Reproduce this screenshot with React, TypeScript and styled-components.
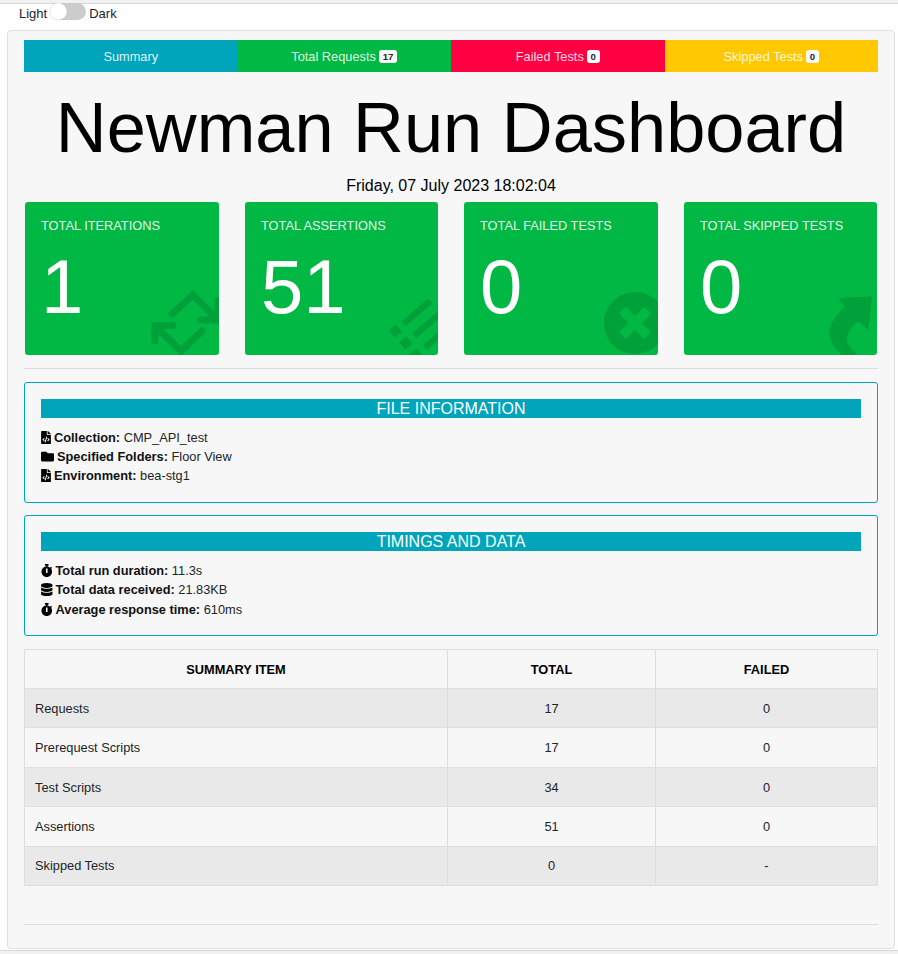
import React from "react"
import styled, { createGlobalStyle } from "styled-components"
import {
  FaDatabase,
  FaFileCode,
  FaFolder,
  FaList,
  FaStopwatch,
  FaTimesCircle,
} from "react-icons/fa"

const GlobalStyle = createGlobalStyle`
  html, body {
    margin: 0;
    padding: 0;
    background: #fff;
    color: #111;
    font-family: "Liberation Sans", Arial, sans-serif;
    font-size: 12.8px;
  }
`

const TopEdge = styled.div`
  height: 3px;
  background: #f1f1f1;
  border-bottom: 1px solid #d8d8d8;
`

const ThemeRow = styled.div`
  display: flex;
  align-items: center;
  height: 18px;
  padding-left: 19px;
  gap: 3px;
  font-size: 13px;
  color: #212529;
`

const Toggle = styled.span`
  position: relative;
  display: inline-block;
  width: 36px;
  height: 17px;
  border-radius: 9px;
  background: #ccc;
  margin-top: -4px;

  &::before {
    content: "";
    position: absolute;
    left: 0;
    top: 0;
    width: 17px;
    height: 17px;
    border-radius: 50%;
    background: #fff;
    box-shadow: 0 0 1px rgba(0, 0, 0, 0.25);
  }
`

const Page = styled.div`
  box-sizing: border-box;
  width: 888px;
  height: 919px;
  margin: 8px 0 0 7px;
  padding: 9px 16px 0;
  background: #f7f7f7;
  border: 1px solid #dfdfdf;
  border-radius: 4px;
`

const Nav = styled.nav`
  display: grid;
  grid-template-columns: repeat(4, 1fr);
  height: 32px;
`

const NavItem = styled.div<{ $bg: string }>`
  display: flex;
  align-items: center;
  justify-content: center;
  gap: 3px;
  background: ${p => p.$bg};
  color: rgba(255, 255, 255, 0.88);
  font-size: 12.8px;
`

const Badge = styled.span`
  display: inline-block;
  padding: 2px 3.8px;
  background: #fff;
  color: #212529;
  border-radius: 3px;
  font-size: 9.6px;
  font-weight: 700;
  line-height: 1;
  margin-top: 1px;
`

const Title = styled.h1`
  margin: 13px 0 0;
  text-align: center;
  font-size: 70.4px;
  font-weight: 400;
  line-height: 86px;
  color: #000;
`

const DateLine = styled.div`
  margin-top: 6px;
  text-align: center;
  font-size: 16px;
  line-height: 18px;
  color: #000;
`

const Stats = styled.div`
  display: grid;
  grid-template-columns: 194px 193px 194px 193px;
  justify-content: space-between;
  margin: 7px 1px 0;
`

const StatCard = styled.div`
  position: relative;
  overflow: hidden;
  box-sizing: border-box;
  height: 153px;
  padding: 16px;
  background: #00b843;
  border-radius: 3px;
  color: #fff;
`

const StatLabel = styled.div`
  color: rgba(255, 255, 255, 0.9);
  font-size: 12.8px;
  line-height: 16px;
`

const StatValue = styled.div`
  margin-top: 11px;
  font-size: 76px;
  line-height: 84px;
  color: #fff;
`

const StatIcon = styled.span<{ $right: number; $bottom: number; $size?: number; $rotate?: number }>`
  position: absolute;
  right: ${p => p.$right}px;
  bottom: ${p => p.$bottom}px;
  display: flex;
  color: #000;
  opacity: 0.12;
  font-size: ${p => p.$size ?? 16}px;
  transform: rotate(${p => p.$rotate ?? 0}deg);
`

const Rule = styled.hr<{ $top: number; $bottom: number }>`
  margin: ${p => p.$top}px 0 ${p => p.$bottom}px;
  border: 0;
  border-top: 1px solid #dcdcdc;
`

const InfoBox = styled.section`
  box-sizing: border-box;
  height: 121px;
  margin-bottom: 12px;
  padding: 16px;
  border: 1px solid #00a5bb;
  border-radius: 3px;
`

const InfoHeading = styled.h2`
  margin: 0 0 10px;
  height: 19px;
  background: #00a5bb;
  color: #fff;
  text-align: center;
  font-size: 16px;
  font-weight: 400;
  line-height: 19px;
`

const InfoLine = styled.div<{ $height?: number }>`
  display: flex;
  align-items: center;
  gap: 3px;
  height: ${p => p.$height ?? 19}px;
  font-size: 12.8px;
  color: #212529;

  svg {
    flex: none;
    color: #000;
  }

  b {
    color: #111;
  }
`

const FileIcon = styled(FaFileCode)`
  && {
    width: 10px;
    height: 13px;
  }
`

const FolderIcon = styled(FaFolder)`
  && {
    width: 13px;
    height: 13px;
  }
`

const WatchIcon = styled(FaStopwatch)`
  && {
    width: 11.5px;
    height: 13px;
  }
`

const DataIcon = styled(FaDatabase)`
  && {
    width: 11.5px;
    height: 13px;
  }
`

const Table = styled.table`
  width: 853px;
  margin-top: 13px;
  border-collapse: collapse;
  table-layout: fixed;
  font-size: 12.8px;
  color: #212529;
`

const HeadCell = styled.th<{ $width: number }>`
  box-sizing: border-box;
  width: ${p => p.$width}px;
  height: 39px;
  padding: 0;
  border: 1px solid #dedede;
  color: #000;
  font-weight: 700;
  text-align: center;
`

const Row = styled.tr<{ $striped: boolean }>`
  background: ${p => (p.$striped ? "#e9e9e9" : "transparent")};
`

const Cell = styled.td<{ $name?: boolean }>`
  box-sizing: border-box;
  height: 39.45px;
  padding: ${p => (p.$name ? "0 0 0 10px" : "0")};
  border: 1px solid #dedede;
  text-align: ${p => (p.$name ? "left" : "center")};
`

const BottomEdge = styled.div`
  height: 3px;
  margin-top: 1px;
  background: #f1f1f1;
  border-top: 1px solid #d8d8d8;
`

const RetweetMark = () => (
  <svg width="90" height="75" viewBox="0 0 90 75" fill="none" stroke="currentColor" strokeWidth="7" strokeLinecap="round" strokeLinejoin="miter">
    <path d="M33 40.5H15V56" />
    <path d="M16 42L41 66L62 46" />
    <path d="M32 29L53 10L77 34" />
    <path d="M61 35H78V16" />
  </svg>
)

const ShareMark = () => (
  <svg width="90" height="75" viewBox="0 0 90 75" fill="currentColor">
    <path d="M72 11.5L38.5 13L45 22C35 30 29 40 29.5 50C30 58 36 65 42 70H58C50 64 46 58 47 52C48 46 53 40 58 36.5L68.5 45Z" />
  </svg>
)

const rows = [
  ["Requests", "17", "0"],
  ["Prerequest Scripts", "17", "0"],
  ["Test Scripts", "34", "0"],
  ["Assertions", "51", "0"],
  ["Skipped Tests", "0", "-"],
]

export default function App() {
  return (
    <>
      <GlobalStyle />
      <TopEdge />
      <ThemeRow>
        Light <Toggle /> Dark
      </ThemeRow>
      <Page>
        <Nav>
          <NavItem $bg="#00a5bb">Summary</NavItem>
          <NavItem $bg="#00b843">
            Total Requests <Badge>17</Badge>
          </NavItem>
          <NavItem $bg="#ff0043">
            Failed Tests <Badge>0</Badge>
          </NavItem>
          <NavItem $bg="#ffc800">
            Skipped Tests <Badge>0</Badge>
          </NavItem>
        </Nav>

        <Title>Newman Run Dashboard</Title>
        <DateLine>Friday, 07 July 2023 18:02:04</DateLine>

        <Stats>
          <StatCard>
            <StatLabel>TOTAL ITERATIONS</StatLabel>
            <StatValue>1</StatValue>
            <StatIcon $right={-11} $bottom={-5}>
              <RetweetMark />
            </StatIcon>
          </StatCard>
          <StatCard>
            <StatLabel>TOTAL ASSERTIONS</StatLabel>
            <StatValue>51</StatValue>
            <StatIcon $right={-9} $bottom={0} $size={51} $rotate={-41}>
              <FaList />
            </StatIcon>
          </StatCard>
          <StatCard>
            <StatLabel>TOTAL FAILED TESTS</StatLabel>
            <StatValue>0</StatValue>
            <StatIcon $right={-9} $bottom={0} $size={64}>
              <FaTimesCircle />
            </StatIcon>
          </StatCard>
          <StatCard>
            <StatLabel>TOTAL SKIPPED TESTS</StatLabel>
            <StatValue>0</StatValue>
            <StatIcon $right={-13} $bottom={-5}>
              <ShareMark />
            </StatIcon>
          </StatCard>
        </Stats>

        <Rule $top={13} $bottom={13} />

        <InfoBox>
          <InfoHeading>FILE INFORMATION</InfoHeading>
          <InfoLine>
            <FileIcon />
            <span>
              <b>Collection:</b> CMP_API_test
            </span>
          </InfoLine>
          <InfoLine>
            <FolderIcon />
            <span>
              <b>Specified Folders:</b> Floor View
            </span>
          </InfoLine>
          <InfoLine>
            <FileIcon />
            <span>
              <b>Environment:</b> bea-stg1
            </span>
          </InfoLine>
        </InfoBox>

        <InfoBox>
          <InfoHeading>TIMINGS AND DATA</InfoHeading>
          <InfoLine>
            <WatchIcon />
            <span>
              <b>Total run duration:</b> 11.3s
            </span>
          </InfoLine>
          <InfoLine>
            <DataIcon />
            <span>
              <b>Total data received:</b> 21.83KB
            </span>
          </InfoLine>
          <InfoLine $height={20}>
            <WatchIcon />
            <span>
              <b>Average response time:</b> 610ms
            </span>
          </InfoLine>
        </InfoBox>

        <Table>
          <thead>
            <tr>
              <HeadCell $width={423}>SUMMARY ITEM</HeadCell>
              <HeadCell $width={208}>TOTAL</HeadCell>
              <HeadCell $width={222}>FAILED</HeadCell>
            </tr>
          </thead>
          <tbody>
            {rows.map(([name, total, failed], i) => (
              <Row key={name} $striped={i % 2 === 0}>
                <Cell $name>{name}</Cell>
                <Cell>{total}</Cell>
                <Cell>{failed}</Cell>
              </Row>
            ))}
          </tbody>
        </Table>

        <Rule $top={38} $bottom={0} />
      </Page>
      <BottomEdge />
    </>
  )
}
